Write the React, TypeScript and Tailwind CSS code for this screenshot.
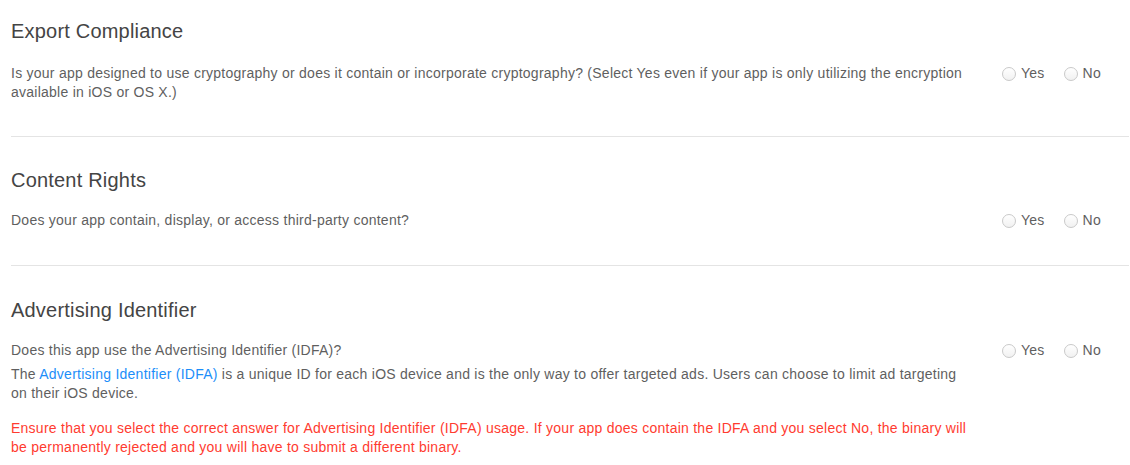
import { useState } from "react";

type Answer = "yes" | "no" | null;

function Radio({ label, checked, onChange }: { label: string; checked: boolean; onChange: () => void }) {
  return (
    <label className="flex items-center gap-[5px] cursor-pointer" onClick={onChange}>
      <span
        className={`h-[14px] w-[14px] rounded-full border border-[#c9c9c9] bg-gradient-to-b from-white to-[#f1f1f1] flex items-center justify-center ${
          checked ? "border-[#1c8ef9]" : ""
        }`}
      >
        {checked && <span className="h-[6px] w-[6px] rounded-full bg-[#1c8ef9]" />}
      </span>
      <span className="text-[14px] leading-[19px] text-[#5f5f5f]">{label}</span>
    </label>
  );
}

function YesNo() {
  const [v, setV] = useState<Answer>(null);
  return (
    <div className="ml-auto mr-[28px] flex items-center gap-[19px] h-[19px]">
      <Radio label="Yes" checked={v === "yes"} onChange={() => setV("yes")} />
      <Radio label="No" checked={v === "no"} onChange={() => setV("no")} />
    </div>
  );
}

function Section({
  title,
  children,
  pt,
  pb,
  gap,
  border = true,
}: {
  title: string;
  children: React.ReactNode;
  pt: string;
  pb: string;
  gap: string;
  border?: boolean;
}) {
  return (
    <section className={`${pt} ${pb} ${border ? "border-b border-[#e4e4e4]" : ""}`}>
      <h2 className="text-[20px] leading-[24px] text-[#444] font-normal tracking-[0.2px]">{title}</h2>
      <div className={`${gap} flex items-start`}>{children}</div>
    </section>
  );
}

export default function App() {
  return (
    <div
      className="bg-white min-h-[465px] pl-[11px] pr-[1px] text-[14px] leading-[19px] text-[#5f5f5f] tracking-[0.25px]"
      style={{ fontFamily: '"Liberation Sans", Arial, sans-serif' }}
    >
      <Section title="Export Compliance" pt="pt-[19px]" pb="pb-[34px]" gap="mt-[21px]">
        <p className="w-[960px]">
          Is your app designed to use cryptography or does it contain or incorporate cryptography? (Select Yes even if
          your app is only utilizing the encryption available in iOS or OS X.)
        </p>
        <YesNo />
      </Section>

      <Section title="Content Rights" pt="pt-[31px]" pb="pb-[35px]" gap="mt-[19px]">
        <p className="w-[960px]">Does your app contain, display, or access third-party content?</p>
        <YesNo />
      </Section>

      <Section title="Advertising Identifier" pt="pt-[32px]" pb="pb-4" gap="mt-[19px]" border={false}>
        <div className="w-[960px]">
          <p>Does this app use the Advertising Identifier (IDFA)?</p>
          <p className="mt-[5px]">
            The{" "}
            <a href="#" className="text-[#1c8ef9]">
              Advertising Identifier (IDFA)
            </a>{" "}
            is a unique ID for each iOS device and is the only way to offer targeted ads. Users can choose to limit ad
            targeting on their iOS device.
          </p>
          <p className="mt-[16px] text-[#ff3b30]">
            Ensure that you select the correct answer for Advertising Identifier (IDFA) usage. If your app does contain
            the IDFA and you select No, the binary will be permanently rejected and you will have to submit a different
            binary.
          </p>
        </div>
        <YesNo />
      </Section>
    </div>
  );
}
